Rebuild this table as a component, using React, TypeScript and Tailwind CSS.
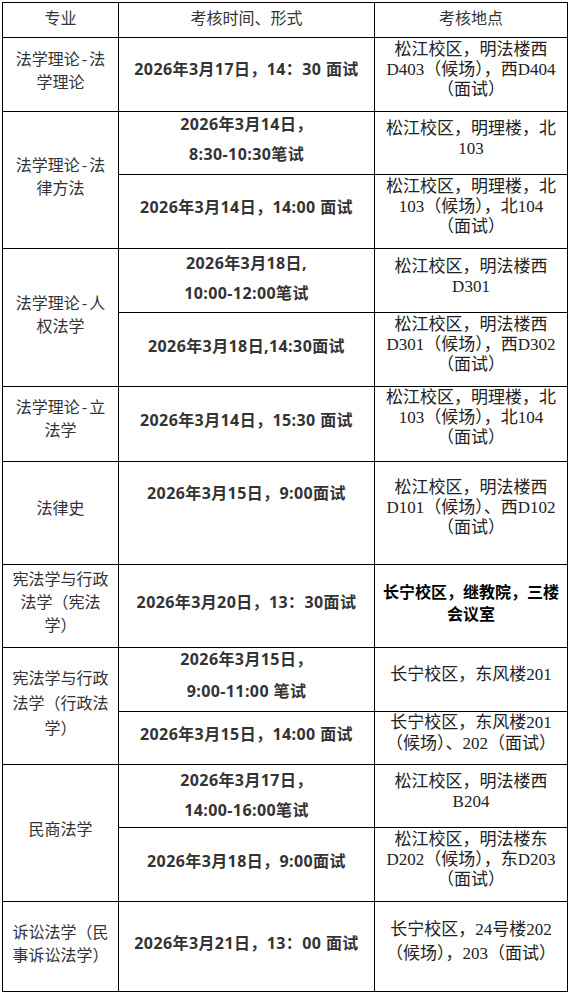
import React from "react";

const base =
  "flex items-center justify-center text-center border-r border-b border-black whitespace-nowrap";
const c1 =
  "font-['Noto_Sans_CJK_SC',sans-serif] text-[16px] leading-[23px] text-[#333]";
const c2 =
  "font-['Open_Sans','Noto_Sans_CJK_SC',sans-serif] font-bold text-[16px] tracking-[0.4px] leading-[30px] text-[#333]";
const c3 =
  "font-['Liberation_Serif','Noto_Sans_CJK_SC',serif] text-[17px] leading-[20px] text-[#222]";

function L({ lines }: { lines: React.ReactNode[] }) {
  return (
    <div>
      {lines.map((l, i) => (
        <React.Fragment key={i}>
          {i > 0 && <br />}
          {l}
        </React.Fragment>
      ))}
    </div>
  );
}

function Dash({ a, b }: { a: string; b: string }) {
  return (
    <>
      {a}
      <span className="px-[2px]">-</span>
      {b}
    </>
  );
}

export default function App() {
  return (
    <div className="bg-white pl-[2px] pt-[2px]">
      <div className="grid w-max grid-cols-[116px_256px_193px] grid-rows-[35px_74px_63px_74px_64px_74px_75px_103px_83px_64px_53px_63px_74px_90px] border-l border-t border-black">
        {/* header */}
        <div className={`${base} ${c1} pb-[5px]`}>专业</div>
        <div className={`${base} ${c1} pb-[5px]`}>考核时间、形式</div>
        <div className={`${base} ${c1} pb-[5px]`}>考核地点</div>

        {/* r1 */}
        <div className={`${base} ${c1} pb-[10px]`}>
          <L lines={[<Dash a="法学理论" b="法" />, "学理论"]} />
        </div>
        <div className={`${base} ${c2} pb-[11px]`}>2026年3月17日，14：30 面试</div>
        <div className={`${base} ${c3} pb-[10px]`}>
          <L lines={["松江校区，明法楼西", "D403（候场），西D404", "（面试）"]} />
        </div>

        {/* r2 */}
        <div className={`${base} ${c1} row-span-2 pb-[9px]`}>
          <L lines={[<Dash a="法学理论" b="法" />, "律方法"]} />
        </div>
        <div className={`${base} ${c2} pb-[8px]`}>
          <L lines={["2026年3月14日，", "8:30-10:30笔试"]} />
        </div>
        <div className={`${base} ${c3} pb-[9px]`}>
          <L lines={["松江校区，明理楼，北", "103"]} />
        </div>
        <div className={`${base} ${c2} pb-[9px]`}>2026年3月14日，14:00 面试</div>
        <div className={`${base} ${c3} pb-[9px]`}>
          <L lines={["松江校区，明理楼，北", "103（候场），北104", "（面试）"]} />
        </div>

        {/* r3 */}
        <div className={`${base} ${c1} row-span-2 pb-[8px]`}>
          <L lines={[<Dash a="法学理论" b="人" />, "权法学"]} />
        </div>
        <div className={`${base} ${c2} pb-[5px]`}>
          <L lines={["2026年3月18日,", "10:00-12:00笔试"]} />
        </div>
        <div className={`${base} ${c3} pb-[8px]`}>
          <L lines={["松江校区，明法楼西", "D301"]} />
        </div>
        <div className={`${base} ${c2} pb-[7px]`}>2026年3月18日,14:30面试</div>
        <div className={`${base} ${c3} pb-[9px]`}>
          <L lines={["松江校区，明法楼西", "D301（候场），西D302", "（面试）"]} />
        </div>

        {/* r4 */}
        <div className={`${base} ${c1} pb-[12px]`}>
          <L lines={[<Dash a="法学理论" b="立" />, "法学"]} />
        </div>
        <div className={`${base} ${c2} pb-[8px]`}>2026年3月14日，15:30 面试</div>
        <div className={`${base} ${c3} pb-[12px]`}>
          <L lines={["松江校区，明理楼，北", "103（候场），北104", "（面试）"]} />
        </div>

        {/* r5 */}
        <div className={`${base} ${c1} pb-[12px]`}>法律史</div>
        <div className={`${base} ${c2} pb-[40px]`}>2026年3月15日，9:00面试</div>
        <div className={`${base} ${c3} pb-[10px]`}>
          <L lines={["松江校区，明法楼西", "D101（候场）、西D102", "（面试）"]} />
        </div>

        {/* r6 */}
        <div className={`${base} ${c1} pb-[9px]`}>
          <L lines={["宪法学与行政", "法学（宪法", "学）"]} />
        </div>
        <div className={`${base} ${c2} pb-[8px]`}>2026年3月20日，13：30面试</div>
        <div
          className={`${base} font-['Noto_Sans_CJK_SC',sans-serif] font-bold text-[16px] leading-[22px] text-black pb-[8px]`}
        >
          <L lines={["长宁校区，继教院，三楼", "会议室"]} />
        </div>

        {/* r7 */}
        <div className={`${base} ${c1} row-span-2 leading-[25px] pb-[8px]`}>
          <L lines={["宪法学与行政", "法学（行政法", "学）"]} />
        </div>
        <div className={`${base} ${c2} leading-[32px] pb-[9px]`}>
          <L lines={["2026年3月15日，", "9:00-11:00 笔试"]} />
        </div>
        <div className={`${base} ${c3} pb-[9px]`}>长宁校区，东风楼201</div>
        <div className={`${base} ${c2} pb-[8px]`}>2026年3月15日，14:00 面试</div>
        <div className={`${base} ${c3} leading-[21px] pb-[11px]`}>
          <L lines={["长宁校区，东风楼201", "（候场）、202（面试）"]} />
        </div>

        {/* r8 */}
        <div className={`${base} ${c1} row-span-2 pb-[10px]`}>民商法学</div>
        <div className={`${base} ${c2} leading-[25px] pb-[3px]`}>
          <L lines={["2026年3月17日，", "14:00-16:00笔试"]} />
        </div>
        <div className={`${base} ${c3} pb-[8px]`}>
          <L lines={["松江校区，明法楼西", "B204"]} />
        </div>
        <div className={`${base} ${c2} pb-[7px]`}>2026年3月18日，9:00面试</div>
        <div className={`${base} ${c3} pb-[9px]`}>
          <L lines={["松江校区，明法楼东", "D202（候场），东D203", "（面试）"]} />
        </div>

        {/* r9 */}
        <div className={`${base} ${c1} leading-[22px] pb-[7px]`}>
          <L lines={["诉讼法学（民", "事诉讼法学）"]} />
        </div>
        <div className={`${base} ${c2} pb-[7px]`}>2026年3月21日，13：00 面试</div>
        <div className={`${base} ${c3} leading-[24px] pb-[10px]`}>
          <L lines={["长宁校区，24号楼202", "（候场），203（面试）"]} />
        </div>
      </div>
    </div>
  );
}
